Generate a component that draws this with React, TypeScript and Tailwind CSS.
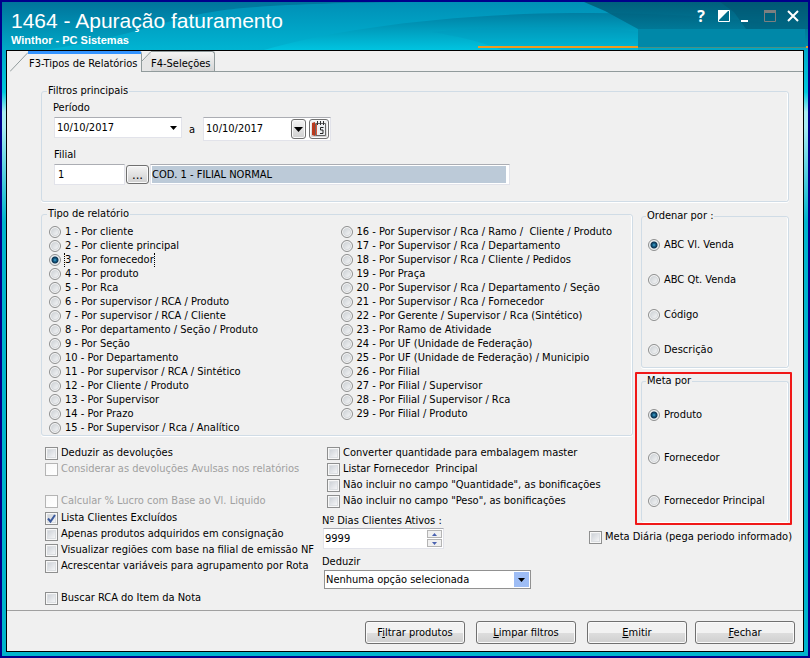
import { ReactNode } from "react";

const reportsLeft = [
  "1 - Por cliente",
  "2 - Por cliente principal",
  "3 - Por fornecedor",
  "4 - Por produto",
  "5 - Por Rca",
  "6 - Por supervisor / RCA / Produto",
  "7 - Por supervisor / RCA / Cliente",
  "8 - Por departamento / Seção / Produto",
  "9 - Por Seção",
  "10 - Por Departamento",
  "11 - Por supervisor / RCA / Sintético",
  "12 - Por Cliente / Produto",
  "13 - Por Supervisor",
  "14 - Por Prazo",
  "15 - Por Supervisor / Rca / Analítico",
];

const reportsRight = [
  "16 - Por Supervisor / Rca / Ramo /  Cliente / Produto",
  "17 - Por Supervisor / Rca / Departamento",
  "18 - Por Supervisor / Rca / Cliente / Pedidos",
  "19 - Por Praça",
  "20 - Por Supervisor / Rca / Departamento / Seção",
  "21 - Por Supervisor / Rca / Fornecedor",
  "22 - Por Gerente / Supervisor / Rca (Sintético)",
  "23 - Por Ramo de Atividade",
  "24 - Por UF (Unidade de Federação)",
  "25 - Por UF (Unidade de Federação) / Municipio",
  "26 - Por Filial",
  "27 - Por Filial / Supervisor",
  "28 - Por Filial / Supervisor / Rca",
  "29 - Por Filial / Produto",
];

const Radio = ({
  name,
  label,
  checked,
  focused,
  className,
}: {
  name: string;
  label: string;
  checked?: boolean;
  focused?: boolean;
  className: string;
}) => (
  <label className={`flex items-center gap-1 whitespace-pre ${className}`}>
    <input
      type="radio"
      name={name}
      defaultChecked={checked}
      className="size-3 shrink-0 appearance-none rounded-full border border-[#8e8f8f] bg-linear-to-br from-[#c4c9ce] to-white shadow-[inset_0_0_0_1px_#f8f8f8,inset_0_0_0_2px_#d6d9dc] checked:bg-[radial-gradient(circle_at_50%_50%,#5cc0e2_0,#1b6f9c_1px,#0b3350_3px,#eceff1_4px)] checked:shadow-none"
    />
    <span
      className={
        focused ? "-mx-px border-x border-dotted border-black" : undefined
      }
    >
      {label}
    </span>
  </label>
);

const CheckBox = ({
  label,
  checked,
  disabled,
  className = "",
}: {
  label: string;
  checked?: boolean;
  disabled?: boolean;
  className?: string;
}) => (
  <label
    className={`flex h-4 items-center gap-[3px] whitespace-pre ${
      disabled ? "text-[#a0a0a0]" : ""
    } ${className}`}
  >
    <span className="relative flex">
      <input
        type="checkbox"
        defaultChecked={checked}
        disabled={disabled}
        className="peer size-[13px] appearance-none border border-[#8e8f8f] bg-linear-to-br from-[#c4c9d0] to-white shadow-[inset_0_0_0_1px_#f8f8f8,inset_0_0_0_2px_#dcdfe2] disabled:border-[#b4b4b4] disabled:from-[#f8f8f8] disabled:shadow-none"
      />
      <svg
        viewBox="0 0 13 13"
        className="pointer-events-none absolute inset-0 hidden size-[13px] peer-checked:block"
      >
        <path
          d="M3 6.5 L5.5 9.5 L10 3"
          fill="none"
          stroke="#3c5a9c"
          strokeWidth="2"
        />
      </svg>
    </span>
    {label}
  </label>
);

const Group = ({
  title,
  className = "",
  legendClassName = "",
  children,
}: {
  title: string;
  className?: string;
  legendClassName?: string;
  children: ReactNode;
}) => (
  <fieldset
    className={`min-w-0 rounded-[3px] border border-[#d0dce6] shadow-[inset_-1px_0_0_#fff,0_1px_0_#fff] ${className}`}
  >
    <legend className={`px-px ${legendClassName}`}>{title}</legend>
    {children}
  </fieldset>
);

const Arrow = () => (
  <svg viewBox="0 0 9 5" className="h-[5px] w-[9px]">
    <path d="M0 0 H9 L4.5 5 Z" fill="#000" />
  </svg>
);

const SmallButton = ({
  label,
  className,
  children,
}: {
  label: string;
  className: string;
  children: ReactNode;
}) => (
  <button
    aria-label={label}
    className={`flex shrink-0 items-center justify-center rounded-[3px] border border-[#707070] bg-linear-to-b from-[#f4f4f4] to-[#cfcfcf] shadow-[inset_0_0_0_1px_#fafafa] ${className}`}
  >
    {children}
  </button>
);

const ActionButton = ({ children }: { children: ReactNode }) => (
  <button className="h-[23px] w-[100px] rounded-[3px] border border-[#707070] bg-linear-to-b from-[#f2f2f2] from-50% via-[#dedede] via-50% to-[#cfcfcf] shadow-[inset_0_0_0_1px_#fafafa]">
    {children}
  </button>
);

const TitleBar = () => (
  <header className="relative flex h-12 shrink-0 justify-between overflow-hidden text-white">
    <svg
      viewBox="0 0 806 48"
      preserveAspectRatio="none"
      className="absolute inset-0 h-full w-full"
    >
      <defs>
        <linearGradient id="sky" x1="0" y1="0" x2="0" y2="1">
          <stop offset="0" stopColor="#00749b" />
          <stop offset="1" stopColor="#00a9c8" />
        </linearGradient>
        <linearGradient id="wave" x1="0" y1="0" x2="0" y2="1">
          <stop offset="0" stopColor="#008fb6" />
          <stop offset="1" stopColor="#00b4d2" />
        </linearGradient>
        <linearGradient id="front" x1="0" y1="0" x2="0" y2="1">
          <stop offset="0" stopColor="#007ea2" />
          <stop offset="1" stopColor="#00c4e0" />
        </linearGradient>
        <linearGradient id="shade" x1="0" y1="0" x2="0" y2="1">
          <stop offset="0" stopColor="#005672" />
          <stop offset="1" stopColor="#0088a8" />
        </linearGradient>
      </defs>
      <rect width="806" height="48" fill="url(#sky)" />
      <path
        d="M210 10 C250 3 330 1 400 0 H806 V48 H40 C110 40 170 16 210 10 Z"
        fill="url(#wave)"
      />
      <path
        d="M262 48 C330 28 440 12 570 11 C660 10 740 16 806 26 V48 Z"
        fill="url(#front)"
      />
      <path
        d="M430 30 C520 22 600 24 636 30 V48 H500 C480 40 455 34 430 30 Z"
        fill="#0098bc"
        opacity="0.3"
      />
      <path
        d="M540 0 H582 L603 9 L636 27 V48 H806 V0 Z"
        fill="none"
      />
      <path
        d="M582 0 H806 V48 H636 V27 L603 9 Z"
        fill="url(#shade)"
        opacity="0.85"
      />
      <path d="M718 0 H806 V27 H744 L732 10 Z" fill="#004f69" opacity="0.4" />
      <rect x="476" y="44" width="160" height="2" fill="#f09a1e" />
      <rect x="636" y="27" width="167" height="18" fill="#0088a8" />
      <rect x="636" y="45" width="168" height="1" fill="#4a8f80" />
      <rect x="636" y="46" width="170" height="2" fill="#00a6c4" />
      <rect x="804" y="44" width="2" height="2" fill="#f09a1e" />
    </svg>
    <div className="relative pt-[7px] pl-[9px] font-['Liberation_Sans',Arial,sans-serif]">
      <h1 className="text-[21px] leading-6">1464 - Apuração faturamento</h1>
      <p className="text-[11px] leading-[14px] font-bold">
        Winthor - PC Sistemas
      </p>
    </div>
    <div className="relative flex h-7 items-center gap-[11px] pr-[9px]">
      <button
        aria-label="Ajuda"
        className="w-3 font-['Open_Sans',sans-serif] text-[16px] leading-3 font-bold"
      >
        ?
      </button>
      <button aria-label="Alternar" className="size-3">
        <svg viewBox="0 0 12 12" className="size-3">
          <path d="M0.5 0.5 H11.5 V11.5 H0.5 Z" fill="none" stroke="#fff" />
          <path d="M0 0 H11 L0 11 Z" fill="#fff" />
        </svg>
      </button>
      <button aria-label="Minimizar" className="size-3">
        <svg viewBox="0 0 12 12" className="size-3">
          <path d="M0 10 H7 V12 H0 Z" fill="#fff" />
        </svg>
      </button>
      <button aria-label="Maximizar" className="size-3">
        <svg viewBox="0 0 12 12" className="size-3">
          <path d="M0.5 1 H11.5 V11.5 H0.5 Z" fill="none" stroke="#7d7f80" />
          <path d="M0 0 H12 V3 H0 Z" fill="#7d7f80" />
        </svg>
      </button>
      <button aria-label="Fechar janela" className="size-3">
        <svg viewBox="0 0 12 12" className="size-3">
          <path
            d="M1 1 L11 11 M11 1 L1 11"
            stroke="#fff"
            strokeWidth="2"
            fill="none"
          />
        </svg>
      </button>
    </div>
  </header>
);

const Tabs = () => (
  <div role="tablist" className="flex h-[21px] shrink-0 pl-[3px]">
    <button role="tab" aria-selected="true" className="flex">
      <svg viewBox="0 0 18 21" className="h-[21px] w-[18px]">
        <path d="M0 20.5 L18 1.5" stroke="#919b9c" fill="none" />
      </svg>
      <span className="h-[21px] w-[114px] rounded-tr-[3px] border-t-[3px] border-r border-t-[#3393ff] border-r-[#919b9c] pt-[3px] pl-px text-left whitespace-nowrap">
        F3-Tipos de Relatórios
      </span>
    </button>
    <button
      role="tab"
      aria-selected="false"
      className="flex border-b border-[#919b9c]"
    >
      <svg viewBox="0 0 9 20" className="h-5 w-[9px]">
        <path d="M0 20 V11 L9 1 V20 Z" fill="#e6e6e6" />
        <path d="M0 10 L9 0.5" stroke="#919b9c" fill="none" />
      </svg>
      <span className="h-5 w-16 rounded-tr-[3px] border-t border-r border-[#919b9c] bg-linear-to-b from-[#f4f4f4] to-[#d6d6d6] pt-[5px] text-left whitespace-nowrap">
        F4-Seleções
      </span>
    </button>
    <div className="flex-1 border-b border-[#919b9c]" />
  </div>
);

const MainFilters = () => (
  <Group
    title="Filtros principais"
    className="pt-[3px] pr-3 pb-4 pl-[11px]"
    legendClassName="-ml-[6px]"
  >
    <label htmlFor="start">Período</label>
    <div className="mt-[2px] ml-px flex items-start">
      <div className="flex h-[21px] w-32 items-center justify-between border border-[#e2e3ea] border-t-[#abadb3] bg-white pr-1">
        <input
          id="start"
          defaultValue="10/10/2017"
          className="w-24 pl-[2px] outline-none"
        />
        <button aria-label="Abrir calendário inicial">
          <svg viewBox="0 0 7 4" className="h-1 w-[7px]">
            <path d="M0 0 H7 L3.5 4 Z" fill="#000" />
          </svg>
        </button>
      </div>
      <label htmlFor="end" className="mr-2 ml-[7px] mt-[6px]">
        a
      </label>
      <div className="flex h-6 w-32 items-center gap-[3px] border border-[#e2e3ea] border-t-[#abadb3] bg-white pr-px">
        <input
          id="end"
          defaultValue="10/10/2017"
          className="min-w-0 flex-1 pl-[2px] outline-none"
        />
        <SmallButton label="Abrir calendário final" className="h-5 w-[15px]">
          <Arrow />
        </SmallButton>
        <SmallButton label="Calendário" className="h-5 w-5">
          <svg viewBox="0 0 16 16" className="size-4">
            <path d="M1 2 L4 1 V15 L1 14 Z" fill="#b9391d" />
            <path d="M4.5 2.5 H14.5 V14.5 H4.5 Z" fill="#eef0f2" stroke="#666" />
            <path d="M5.5 3 V14" stroke="#d8553a" />
            <path
              d="M6.5 0 V4 M9.5 0 V4 M12.5 0 V4"
              stroke="#333"
              fill="none"
            />
            <path
              d="M12.5 6.5 H9.5 V9 H12 V12.5 H9"
              stroke="#222"
              fill="none"
            />
          </svg>
        </SmallButton>
      </div>
    </div>
    <label htmlFor="branch" className="mt-[7px] ml-px block">
      Filial
    </label>
    <div className="mt-[2px] ml-px flex h-[21px] items-center gap-px">
      <input
        id="branch"
        defaultValue="1"
        className="h-[21px] w-[71px] border border-[#e2e3ea] border-t-[#abadb3] bg-white pl-[3px] outline-none"
      />
      <SmallButton label="Pesquisar filial" className="h-[19px] w-[23px]">
        <span className="text-[13px] leading-3">...</span>
      </SmallButton>
      <input
        readOnly
        aria-label="Nome da filial"
        defaultValue="COD. 1 - FILIAL NORMAL"
        className="h-[21px] w-[360px] border border-[#e2e3ea] border-t-[#abadb3] bg-[#bccad8] pl-px shadow-[inset_0_0_0_1px_#fff,inset_-3px_-1px_0_0_#fff] outline-none"
      />
    </div>
  </Group>
);

const Options = () => (
  <div className="mt-[9px] grid grid-cols-[281px_1fr]">
    <div className="pl-1">
      <CheckBox label="Deduzir as devoluções" />
      <CheckBox
        label="Considerar as devoluções Avulsas nos relatórios"
        disabled
      />
      <CheckBox
        label="Calcular % Lucro com Base ao Vl. Liquido"
        disabled
        className="mt-4"
      />
      <CheckBox label="Lista Clientes Excluídos" checked className="mt-px" />
      <CheckBox label="Apenas produtos adquiridos em consignação" />
      <CheckBox label="Visualizar regiões com base na filial de emissão NF" />
      <CheckBox label="Acrescentar variáveis para agrupamento por Rota" />
      <CheckBox label="Buscar RCA do Item da Nota" className="mt-4" />
    </div>
    <div>
      <div className="pl-[5px]">
        <CheckBox label="Converter quantidade para embalagem master" />
        <CheckBox label="Listar Fornecedor  Principal" />
        <CheckBox label={'Não incluir no campo "Quantidade", as bonificações'} />
        <CheckBox label={'Não incluir no campo "Peso", as bonificações'} />
      </div>
      <label htmlFor="days" className="mt-[5px] block">
        Nº Dias Clientes Ativos :
      </label>
      <div className="ml-px flex h-[21px] w-[121px] items-center border border-[#e2e3ea] border-t-[#abadb3] bg-white pr-px">
        <input
          id="days"
          defaultValue="9999"
          className="min-w-0 flex-1 pl-px outline-none"
        />
        <div className="flex flex-col gap-px">
          <button
            aria-label="Aumentar"
            className="flex h-2 w-[15px] items-center justify-center border border-[#b4b4b4] bg-[#f0f0f0]"
          >
            <svg viewBox="0 0 5 3" className="h-[3px] w-[5px]">
              <path d="M0 3 L2.5 0 L5 3 Z" fill="#4a62b0" />
            </svg>
          </button>
          <button
            aria-label="Diminuir"
            className="flex h-2 w-[15px] items-center justify-center border border-[#b4b4b4] bg-[#f0f0f0]"
          >
            <svg viewBox="0 0 5 3" className="h-[3px] w-[5px]">
              <path d="M0 0 L2.5 3 L5 0 Z" fill="#4a62b0" />
            </svg>
          </button>
        </div>
      </div>
      <label htmlFor="deduct" className="mt-[6px] block">
        Deduzir
      </label>
      <div className="relative mt-px ml-[2px] w-[207px]">
        <select
          id="deduct"
          className="h-[19px] w-full appearance-none border border-[#919191] bg-white pl-px outline-none"
        >
          <option>Nenhuma opção selecionada</option>
        </select>
        <span className="pointer-events-none absolute top-[2px] right-[2px] flex h-[15px] w-[15px] items-center justify-center bg-[#9ebdf5]">
          <svg viewBox="0 0 7 4" className="h-1 w-[7px]">
            <path d="M0 0 H7 L3.5 4 Z" fill="#000" />
          </svg>
        </span>
      </div>
    </div>
  </div>
);

const App = () => {
  return (
    <div className="flex min-h-screen flex-col border-2 border-[#00008b] bg-[linear-gradient(#00a9c8_48px,#00c8dc_90px,#a8ecf2_110px,#a8ecf2_125px,#00b4cc_220px,#00b4cc)] font-['DejaVu_Sans_Condensed','DejaVu_Sans',Tahoma,sans-serif] text-[11px] leading-[14px] text-black">
      <TitleBar />
      <div className="mx-1 mb-1 flex flex-1 flex-col border border-black bg-[#f0f0f0]">
        <Tabs />
        <main className="flex-1 pt-3 pr-[14px] pb-1 pl-[34px]">
          <MainFilters />
          <div className="mt-[5px] flex gap-[2px]">
            <div className="min-w-0 flex-1">
              <Group
                title="Tipo de relatório"
                className="grid grid-cols-2 pt-1 pl-[7px]"
                legendClassName="-ml-[2px]"
              >
                <div>
                  {reportsLeft.map((item, i) => (
                    <Radio
                      key={item}
                      name="report"
                      label={item}
                      checked={i === 2}
                      focused={i === 2}
                      className="h-[14px]"
                    />
                  ))}
                </div>
                <div>
                  {reportsRight.map((item) => (
                    <Radio
                      key={item}
                      name="report"
                      label={item}
                      className="h-[14px]"
                    />
                  ))}
                </div>
              </Group>
              <Options />
            </div>
            <div className="-mr-[3px] flex w-[157px] shrink-0 flex-col pt-[2px]">
              <Group
                title="Ordenar por :"
                className="mr-[3px] ml-[6px] pt-1 pl-[6px]"
                legendClassName="-ml-[2px]"
              >
                <Radio name="order" label="ABC Vl. Venda" checked className="h-[35px]" />
                <Radio name="order" label="ABC Qt. Venda" className="h-[35px]" />
                <Radio name="order" label="Código" className="h-[35px]" />
                <Radio name="order" label="Descrição" className="h-[35px]" />
              </Group>
              <div className="mt-1 rounded-[1px] border-2 border-[#f01818] pr-px pb-px pl-1">
                <Group
                  title="Meta por"
                  className="border-b-0 pt-[5px] pl-[6px]"
                  legendClassName="-ml-[2px]"
                >
                  <Radio name="goal" label="Produto" checked className="h-[43px]" />
                  <Radio name="goal" label="Fornecedor" className="h-[43px]" />
                  <Radio name="goal" label="Fornecedor Principal" className="h-[43px]" />
                </Group>
              </div>
              <CheckBox
                label="Meta Diária (pega periodo informado)"
                className="mt-1 self-end"
              />
            </div>
          </div>
        </main>
        <footer className="flex justify-end gap-2 border-t border-[#a0a0a0] pt-[10px] pr-2 pb-[7px]">
          <div className="flex gap-[11px]">
            <ActionButton>
              F<u>i</u>ltrar produtos
            </ActionButton>
            <ActionButton>
              <u>L</u>impar filtros
            </ActionButton>
            <ActionButton>
              <u>E</u>mitir
            </ActionButton>
          </div>
          <ActionButton>
            <u>F</u>echar
          </ActionButton>
        </footer>
      </div>
    </div>
  );
};

export default App;
